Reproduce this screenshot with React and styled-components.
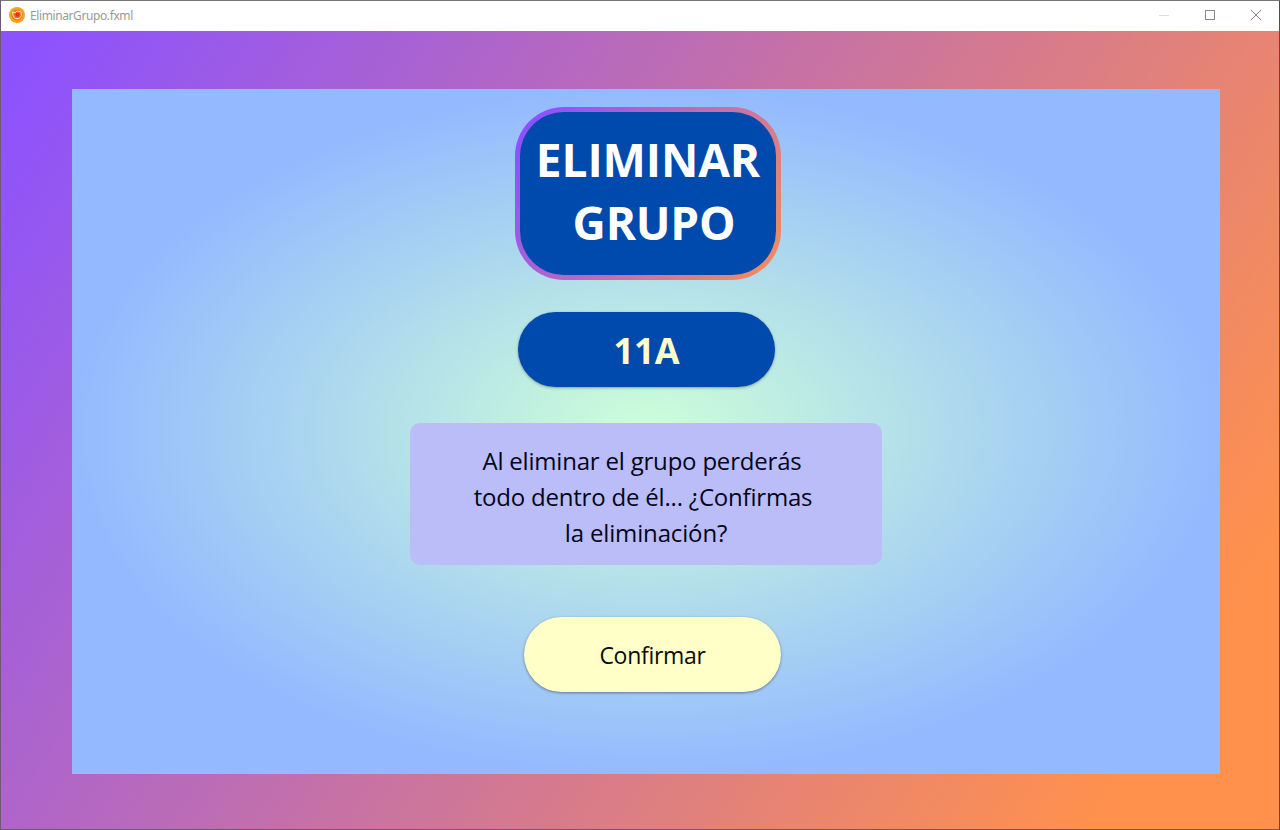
import React from "react";
import styled, { createGlobalStyle } from "styled-components";

const GlobalStyle = createGlobalStyle`
  * { box-sizing: border-box; }
  body { margin: 0; overflow: hidden; }
`;

const Window = styled.div`
  width: 1280px;
  height: 830px;
  display: flex;
  flex-direction: column;
  border: 1px solid #6a5a72;
  border-top-color: #777;
  border-right-color: #5c4a48;
  font-family: "Open Sans", "Noto Sans", sans-serif;
`;

const TitleBar = styled.header`
  height: 30px;
  flex: none;
  display: flex;
  align-items: center;
  padding-left: 8px;
  background: #fff;
`;

const AppIcon = styled.svg`
  width: 16px;
  height: 16px;
  flex: none;
  margin-top: -2px;
`;

const WindowTitle = styled.span`
  margin: -2px 0 0 5px;
  font: 12px "Noto Sans", sans-serif;
  letter-spacing: ${(p) => p.$spacing};
  color: #999;
`;

const Controls = styled.div`
  margin-left: auto;
  display: flex;
`;

const ControlButton = styled.button`
  width: 46px;
  height: 30px;
  padding: 0 0 2px;
  border: 0;
  background: none;
  display: grid;
  place-items: center;
  color: ${(p) => (p.disabled ? "#ddd" : "#888")};
`;

const Backdrop = styled.main`
  flex: 1;
  padding: 58px 59px 55px 71px;
  background: linear-gradient(122deg, #8c52ff 2%, #ff914d 89.5%);
`;

const Panel = styled.section`
  height: 685px;
  padding-top: 18px;
  display: flex;
  flex-direction: column;
  align-items: center;
  background: radial-gradient(closest-side, #cdffd8, #94b9ff);
`;

const TitleCard = styled.div`
  width: 266px;
  height: 173px;
  margin-left: 4px;
  padding: 5px;
  border-radius: 49px;
  background: linear-gradient(122deg, #8c52ff 8%, #f88f56 102%);
`;

const TitleFace = styled.h1`
  height: 100%;
  margin: 0;
  padding-top: 16px;
  border-radius: 44px;
  background: #004aad;
  color: #fff;
  font-size: 46px;
  font-weight: 700;
  line-height: 63px;
  text-align: center;
`;

const Line = styled.span`
  display: block;
  white-space: nowrap;
  letter-spacing: ${(p) => p.$spacing || 0};
  margin-left: ${(p) => p.$shift || 0};
`;

const GroupButton = styled.button`
  width: 257px;
  height: 75px;
  margin-top: 32px;
  padding: 2px 0 0 1px;
  border: 0;
  border-radius: 38px;
  background: #004aad;
  color: #ffffcc;
  font: 700 36px "Open Sans", sans-serif;
  box-shadow: 0 1px 3px rgba(0, 0, 0, 0.35);
`;

const Message = styled.div`
  width: 472px;
  height: 142px;
  margin-top: 36px;
  padding-top: 20px;
  border-radius: 10px;
  background: #bbbdf8;
  color: #05051a;
  font-size: 24px;
  line-height: 36px;
  text-align: center;
`;

const ConfirmButton = styled.button`
  width: 257px;
  height: 75px;
  margin: 52px 0 0 13px;
  padding: 0;
  border: 0;
  border-radius: 38px;
  background: #ffffc8;
  color: #0a0a0a;
  font: 23px "Open Sans", sans-serif;
  letter-spacing: -0.3px;
  box-shadow: 0 1px 3px rgba(0, 0, 0, 0.4);
`;

export default function App() {
  return (
    <Window>
      <GlobalStyle />
      <TitleBar>
        <AppIcon viewBox="0 0 16 16">
          <circle cx="8" cy="8" r="8" fill="#f5a31c" />
          <circle cx="8" cy="8" r="5.6" fill="#f07c1c" />
          <path d="M3.5 5 6.2 5.8 8 4l4 .8.3 4L10 11.8l-4.2-.4L4.2 8.5Z" fill="#f0681c" stroke="#ffe3b8" strokeWidth="1" />
          <circle cx="8.5" cy="7.8" r="2" fill="#e03014" />
        </AppIcon>
        <WindowTitle $spacing="-0.4px">EliminarGrupo.fxml</WindowTitle>
        <Controls>
          <ControlButton disabled aria-label="Minimizar">
            <svg width="10" height="10"><path d="M0 5.5h10" stroke="currentColor" /></svg>
          </ControlButton>
          <ControlButton aria-label="Maximizar">
            <svg width="10" height="10"><rect x=".5" y=".5" width="9" height="9" fill="none" stroke="currentColor" /></svg>
          </ControlButton>
          <ControlButton aria-label="Cerrar">
            <svg width="10" height="10"><path d="M0 0 10 10M10 0 0 10" stroke="currentColor" /></svg>
          </ControlButton>
        </Controls>
      </TitleBar>
      <Backdrop>
        <Panel>
          <TitleCard>
            <TitleFace>
              <Line $spacing="-0.1px">ELIMINAR</Line>
              <Line $shift="12px" $spacing="-0.2px">GRUPO</Line>
            </TitleFace>
          </TitleCard>
          <GroupButton>11A</GroupButton>
          <Message>
            <Line $shift="-8px" $spacing="-0.2px">Al eliminar el grupo perderás</Line>
            <Line $shift="-6px" $spacing="-0.2px">todo dentro de él... ¿Confirmas</Line>
            <Line $spacing="-0.15px">la eliminación?</Line>
          </Message>
          <ConfirmButton>Confirmar</ConfirmButton>
        </Panel>
      </Backdrop>
    </Window>
  );
}
